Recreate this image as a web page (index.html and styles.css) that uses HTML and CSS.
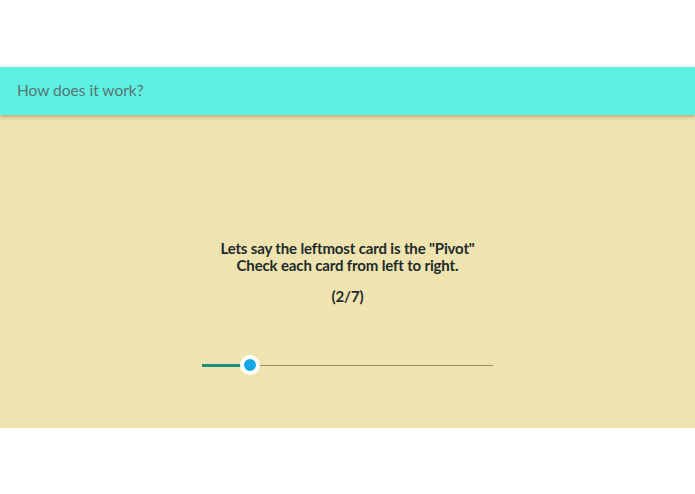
FILE: index.html
```html
<!DOCTYPE html>
<html>
<head>
<meta charset="utf-8">
<link rel="stylesheet" href="styles.css">
</head>
<body>
<div class="top"></div>
<header class="bar">How does it work?</header>
<main class="stage">
  <div class="caption">
    <p class="line">Lets say the leftmost card is the "Pivot"</p>
    <p class="line">Check each card from left to right.</p>
    <p class="line step">(2/7)</p>
  </div>
  <div class="slider">
    <div class="fill" style="width:48px"></div>
    <div class="thumb"></div>
    <div class="rest"></div>
  </div>
</main>
</body>
</html>
```
FILE: styles.css
```css
html, body {
  margin: 0;
  padding: 0;
  background: #ffffff;
  font-family: Lato, "Open Sans", sans-serif;
}
.top {
  height: 67px;
}
.bar {
  position: relative;
  z-index: 1;
  height: 48px;
  box-sizing: border-box;
  padding: 13px 0 0 17px;
  background: #5df0e3;
  color: #5a7471;
  font-size: 15.5px;
  line-height: 20px;
  box-shadow: 0 2px 4px rgba(120, 100, 50, 0.45);
}
.stage {
  height: 313px;
  background: #efe3b0;
  display: flex;
  flex-direction: column;
  align-items: center;
  padding-top: 125px;
  box-sizing: border-box;
}
.caption {
  text-align: center;
  color: #1d2b2a;
  font-weight: 700;
  font-size: 15px;
  letter-spacing: -0.15px;
  line-height: 17px;
}
.line {
  margin: 0;
}
.step {
  margin-top: 14px;
}
.slider {
  margin-top: 50px;
  width: 291px;
  height: 20px;
  display: flex;
  align-items: center;
}
.fill {
  height: 3px;
  background: #1b9080;
  margin-right: -10px;
}
.thumb {
  width: 12px;
  height: 12px;
  border-radius: 50%;
  background: #15a7e8;
  border: 4px solid #ffffff;
  flex: none;
  position: relative;
  z-index: 1;
}
.rest {
  flex: 1;
  height: 1px;
  background: #9a9070;
  margin-left: -10px;
}
```
